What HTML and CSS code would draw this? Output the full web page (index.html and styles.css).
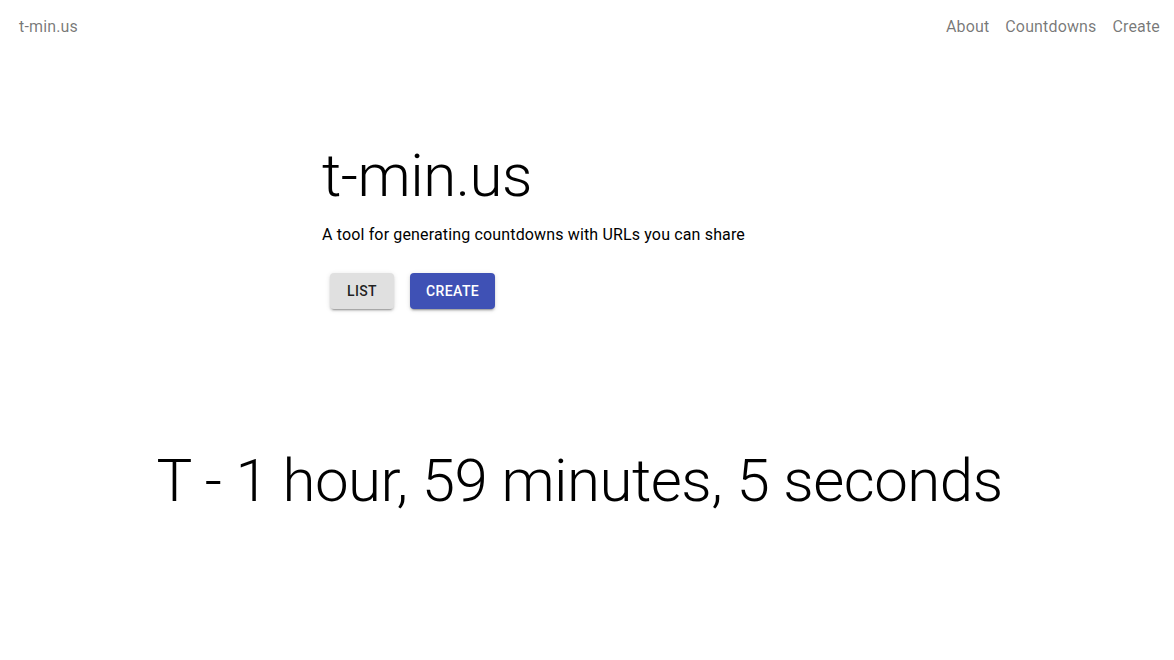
FILE: index.html
```html
<!DOCTYPE html>
<html>
<head>
<meta charset="utf-8">
<link rel="stylesheet" href="styles.css">
</head>
<body>
<header class="navbar">
  <a class="brand" href="#">t-min.us</a>
  <nav class="nav-links">
    <a href="#">About</a>
    <a href="#">Countdowns</a>
    <a href="#">Create</a>
  </nav>
</header>
<main class="main">
  <section class="hero">
    <h1 class="hero-title">t-min.us</h1>
    <p class="hero-sub">A tool for generating countdowns with URLs you can share</p>
    <div class="actions">
      <button class="btn btn-default">List</button>
      <button class="btn btn-primary">Create</button>
    </div>
  </section>
  <section class="countdown">
    <h2 class="countdown-text">T - 1 hour, 59 minutes, 5 seconds</h2>
  </section>
</main>
</body>
</html>
```
FILE: styles.css
```css
* { box-sizing: border-box; }
html, body { margin: 0; padding: 0; background: #fff; }
body {
  font-family: Roboto, "Liberation Sans", sans-serif;
  color: rgba(0,0,0,0.87);
  width: 1174px;
  height: 660px;
  overflow: hidden;
}
.navbar {
  display: flex;
  justify-content: space-between;
  align-items: center;
  height: 52px;
  padding: 0 14px 0 19px;
}
.navbar a {
  text-decoration: none;
  color: rgba(0,0,0,0.54);
  font-size: 16px;
  letter-spacing: 0.15px;
}
.nav-links { display: flex; gap: 16px; }
.main { display: flex; flex-direction: column; }
.hero {
  padding-left: 322px;
  padding-top: 88px;
}
.hero-title {
  margin: 0;
  font-weight: 300;
  font-size: 60px;
  line-height: 1.2;
  color: #000;
  letter-spacing: -0.5px;
}
.hero-sub {
  margin: 13px 0 0;
  font-size: 16px;
  letter-spacing: 0.15px;
  color: #000;
}
.actions { display: flex; gap: 16px; padding-left: 8px; margin-top: 29px; }
.btn {
  min-width: 64px;
  height: 36px;
  padding: 6px 16px;
  border: none;
  border-radius: 4px;
  font-family: Roboto, sans-serif;
  font-weight: 500;
  font-size: 14px;
  letter-spacing: 0.4px;
  text-transform: uppercase;
  box-shadow: 0 3px 1px -2px rgba(0,0,0,0.2), 0 2px 2px 0 rgba(0,0,0,0.14), 0 1px 5px 0 rgba(0,0,0,0.12);
}
.btn-default { background: #e0e0e0; color: rgba(0,0,0,0.87); }
.btn-primary { background: #3f51b5; color: #fff; }
.countdown { text-align: center; margin-top: 136px; padding-right: 15px; }
.countdown-text {
  margin: 0;
  font-weight: 300;
  font-size: 60px;
  line-height: 1.2;
  letter-spacing: -0.5px;
  color: #000;
}
```
